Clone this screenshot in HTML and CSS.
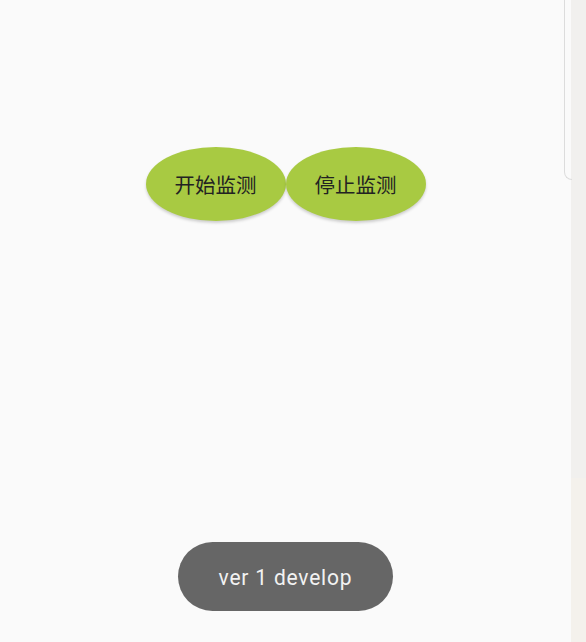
FILE: index.html
```html
<!DOCTYPE html>
<html>
<head>
<meta charset="utf-8">
<link rel="stylesheet" href="styles.css">
</head>
<body>
<div class="screen">
  <div class="main">
    <div class="scroll-edge"></div>
    <div class="buttons">
      <button class="oval">开始监测</button>
      <button class="oval">停止监测</button>
    </div>
    <div class="toast"><span class="toast-text">ver 1 develop</span></div>
  </div>
  <div class="strip">
    <div class="strip-top"></div>
    <div class="strip-bottom"></div>
  </div>
</div>
</body>
</html>
```
FILE: styles.css
```css
html, body {
  margin: 0;
  padding: 0;
  background: #fafafa;
}
.screen {
  display: flex;
  width: 586px;
  height: 642px;
  overflow: hidden;
}
.main {
  position: relative;
  width: 571px;
  height: 642px;
  display: flex;
  flex-direction: column;
  align-items: center;
  background: #fafafa;
}
.scroll-edge {
  position: absolute;
  left: 564px;
  top: -10px;
  width: 8px;
  height: 190px;
  border-left: 1px solid #dcdcdc;
  border-bottom: 1px solid #dcdcdc;
  border-bottom-left-radius: 9px;
  box-sizing: border-box;
}
.buttons {
  display: flex;
  margin-top: 147px;
}
.oval {
  width: 140px;
  height: 74px;
  border: none;
  border-radius: 50%;
  background: #a8ca42;
  color: #222222;
  font-family: "Noto Sans CJK SC", "Noto Sans", sans-serif;
  font-size: 20.5px;
  padding: 0;
  box-shadow: 0 2px 3px rgba(0,0,0,0.18);
}
.toast {
  margin-top: auto;
  margin-bottom: 31px;
  width: 215px;
  height: 69px;
  border-radius: 35px;
  background: #666666;
  color: #f2f2f2;
  font-family: Roboto, "Liberation Sans", sans-serif;
  display: flex;
  align-items: center;
  justify-content: center;
}
.toast-text {
  font-size: 21px;
  letter-spacing: 0.8px;
  transform: scaleY(1.06);
  display: inline-block;
  padding-top: 2px;
}
.strip {
  width: 15px;
  display: flex;
  flex-direction: column;
}
.strip-top {
  height: 478px;
  background: #f1f0ee;
}
.strip-bottom {
  flex: 1;
  background: #f4f1ec;
}
```
